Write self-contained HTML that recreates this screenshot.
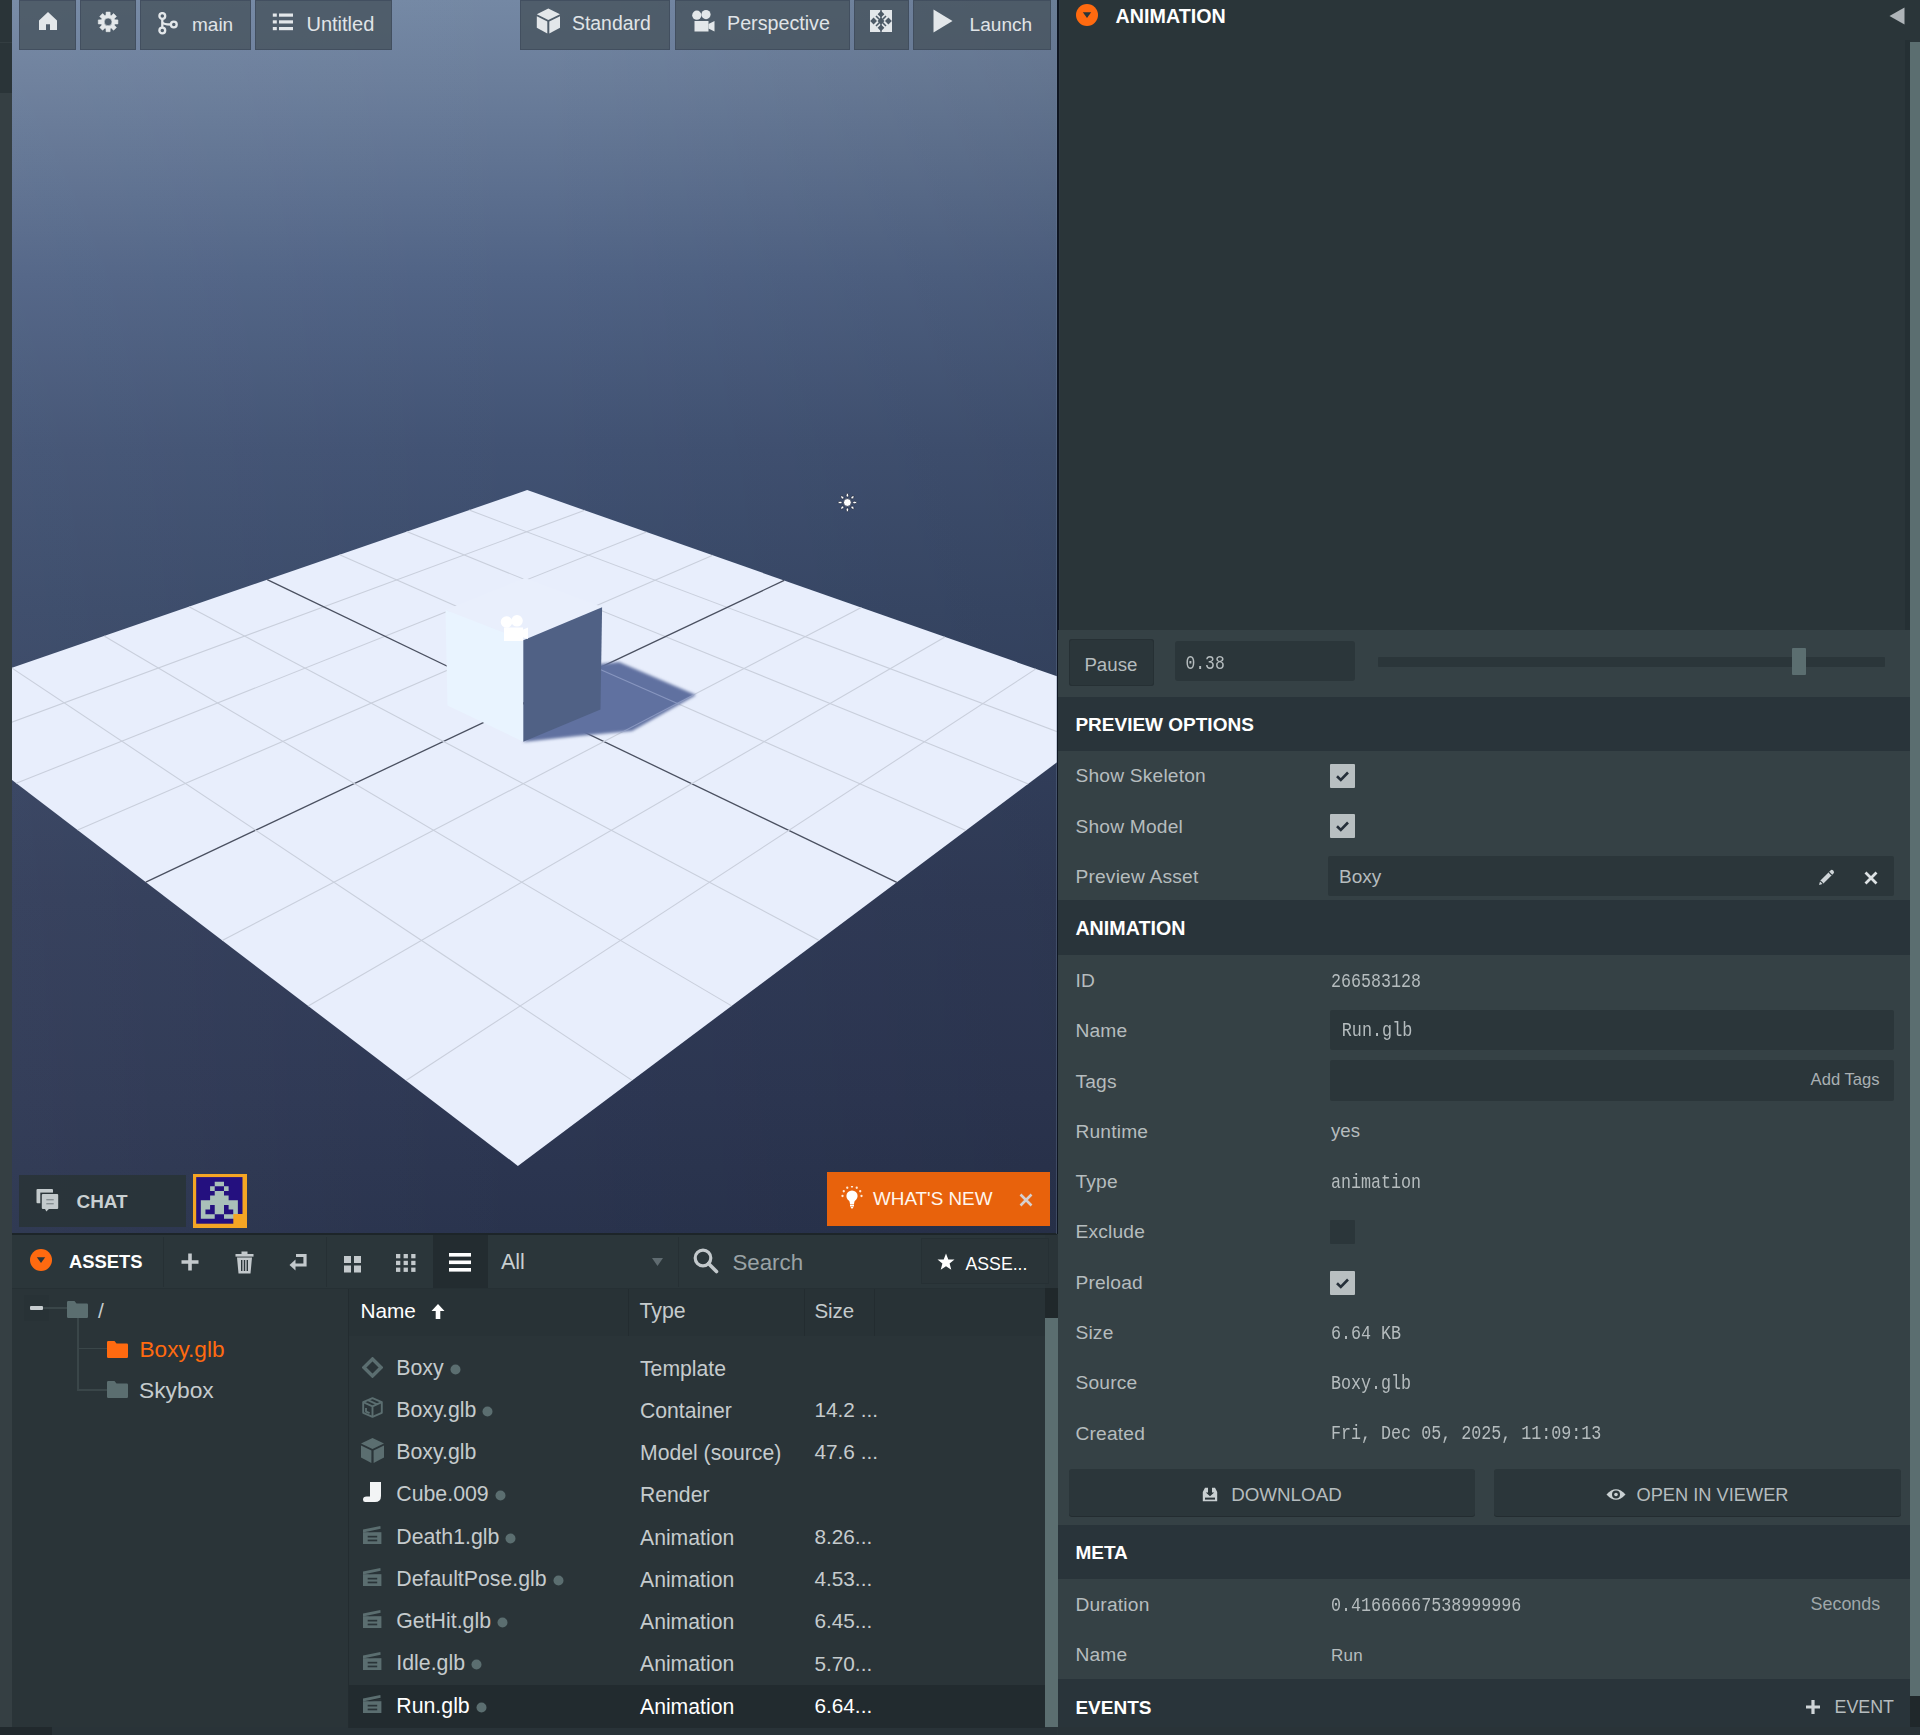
<!DOCTYPE html>
<html><head><meta charset="utf-8">
<style>
*{box-sizing:border-box;margin:0;padding:0}
html,body{width:1920px;height:1735px;overflow:hidden;background:#353f43;font-family:"Liberation Sans",sans-serif}
.abs{position:absolute}
.t{position:absolute;white-space:nowrap;line-height:1}
</style></head><body>
<div class="abs" style="left:0.0px;top:0.0px;width:12.0px;height:93.0px;background:#2a3438;"></div>
<div class="abs" style="left:0.0px;top:42.0px;width:12.0px;height:1.0px;background:#333d41;"></div>
<div class="abs" style="left:0.0px;top:1727.0px;width:52.0px;height:8.0px;background:#21292d;"></div>
<div class="abs" style="left:52.0px;top:1727.0px;width:1006.0px;height:8.0px;background:#293338;"></div>
<div id="vp" class="abs" style="left:12px;top:0px;width:1045px;height:1234px;overflow:hidden;background:linear-gradient(90deg,rgba(255,255,255,0.035) 0%,rgba(255,255,255,0) 50%,rgba(0,0,0,0) 50%,rgba(0,0,0,0.08) 100%),linear-gradient(180deg,rgb(116,136,164) 0.0%,rgb(107,126,155) 6.5%,rgb(80,99,133) 22.3%,rgb(65,82,115) 36.5%,rgb(57,73,104) 49.4%,rgb(49,60,89) 72.9%,rgb(45,55,83) 89.1%,rgb(41,51,77) 100.0%)">
<svg class="abs" style="left:0.0px;top:0.0px;" width="1045" height="1234" viewBox="0 0 1045 1234"><polygon points="515.2,490.1 1123.2,703.8 505.9,1165.9 -101.5,702.7" fill="#e8eefc"/>
<line x1="572.8" y1="510.3" x2="-51.2" y2="741.1" stroke="#c9cfdc" stroke-width="1.1"/>
<line x1="457.1" y1="510.1" x2="1072.3" y2="741.9" stroke="#c9cfdc" stroke-width="1.1"/>
<line x1="634.5" y1="532.0" x2="4.2" y2="783.3" stroke="#c9cfdc" stroke-width="1.1"/>
<line x1="394.7" y1="531.6" x2="1016.2" y2="783.9" stroke="#c9cfdc" stroke-width="1.1"/>
<line x1="700.8" y1="555.3" x2="65.6" y2="830.1" stroke="#c9cfdc" stroke-width="1.1"/>
<line x1="327.6" y1="554.8" x2="954.0" y2="830.5" stroke="#c9cfdc" stroke-width="1.1"/>
<line x1="772.2" y1="580.4" x2="133.8" y2="882.1" stroke="#4a5060" stroke-width="1.3"/>
<line x1="255.2" y1="579.7" x2="884.8" y2="882.3" stroke="#4a5060" stroke-width="1.3"/>
<line x1="849.3" y1="607.5" x2="210.2" y2="940.4" stroke="#c9cfdc" stroke-width="1.1"/>
<line x1="177.0" y1="606.7" x2="807.2" y2="940.4" stroke="#c9cfdc" stroke-width="1.1"/>
<line x1="933.0" y1="636.9" x2="296.2" y2="1006.0" stroke="#c9cfdc" stroke-width="1.1"/>
<line x1="92.1" y1="636.0" x2="719.6" y2="1005.9" stroke="#c9cfdc" stroke-width="1.1"/>
<line x1="1023.9" y1="668.9" x2="394.0" y2="1080.5" stroke="#c9cfdc" stroke-width="1.1"/>
<line x1="-0.4" y1="667.9" x2="620.1" y2="1080.4" stroke="#c9cfdc" stroke-width="1.1"/></svg>
</div>
<div class="abs" style="left:1057.0px;top:0.0px;width:1.0px;height:1234.0px;background:#1c2428;"></div>
<div class="abs" style="left:12.0px;top:1233.0px;width:1046.0px;height:2.0px;background:#1d2529;"></div>
<svg class="abs" style="left:12.0px;top:0.0px;" width="1045" height="1234" viewBox="0 0 1045 1234"><defs><filter id="blur2" x="-20%" y="-20%" width="140%" height="140%"><feGaussianBlur stdDeviation="1.6"/></filter></defs><polygon points="588.0,664.0 607.0,662.0 684.0,695.0 620.0,731.0 566.0,736.0 511.0,742.0 548.0,705.0" fill="#6171a0" filter="url(#blur2)"/><clipPath id="shc"><polygon points="588.0,664.0 607.0,662.0 684.0,695.0 620.0,731.0 566.0,736.0 511.0,742.0 548.0,705.0"/></clipPath><g clip-path="url(#shc)" opacity="0.55"><line x1="572.8" y1="510.3" x2="-51.2" y2="741.1" stroke="#a8b4d8" stroke-width="1.1"/><line x1="457.1" y1="510.1" x2="1072.3" y2="741.9" stroke="#a8b4d8" stroke-width="1.1"/><line x1="634.5" y1="532.0" x2="4.2" y2="783.3" stroke="#a8b4d8" stroke-width="1.1"/><line x1="394.7" y1="531.6" x2="1016.2" y2="783.9" stroke="#a8b4d8" stroke-width="1.1"/><line x1="700.8" y1="555.3" x2="65.6" y2="830.1" stroke="#a8b4d8" stroke-width="1.1"/><line x1="327.6" y1="554.8" x2="954.0" y2="830.5" stroke="#a8b4d8" stroke-width="1.1"/><line x1="849.3" y1="607.5" x2="210.2" y2="940.4" stroke="#a8b4d8" stroke-width="1.1"/><line x1="177.0" y1="606.7" x2="807.2" y2="940.4" stroke="#a8b4d8" stroke-width="1.1"/><line x1="933.0" y1="636.9" x2="296.2" y2="1006.0" stroke="#a8b4d8" stroke-width="1.1"/><line x1="92.1" y1="636.0" x2="719.6" y2="1005.9" stroke="#a8b4d8" stroke-width="1.1"/><line x1="1023.9" y1="668.9" x2="394.0" y2="1080.5" stroke="#a8b4d8" stroke-width="1.1"/><line x1="-0.4" y1="667.9" x2="620.1" y2="1080.4" stroke="#a8b4d8" stroke-width="1.1"/></g><polygon points="433.5,610.0 513.0,578.0 590.0,607.0 511.3,640.3" fill="#e9effc"/><polygon points="433.5,610.0 511.3,640.3 511.3,741.7 435.5,705.5" fill="#e9f4ff"/><polygon points="511.3,640.3 590.1,607.2 588.5,709.6 511.3,741.7" fill="#506185"/><g fill="#ffffff" transform="translate(488.0,615.0)"><circle cx="6.5" cy="7" r="5.8"/><circle cx="17" cy="5.8" r="5.8"/><rect x="4" y="12.5" width="19" height="13.5"/><polygon points="22,15 28,12.5 28,24 22,22"/></g><g transform="translate(835.4,502.5)" fill="#ffffff" stroke="#1c2438" stroke-width="0.7"><circle cx="0" cy="0" r="3.9"/><ellipse cx="7.30" cy="0.00" rx="1.25" ry="1.9" transform="rotate(90.0 7.30 0.00)"/><ellipse cx="5.16" cy="5.16" rx="1.25" ry="1.9" transform="rotate(135.0 5.16 5.16)"/><ellipse cx="0.00" cy="7.30" rx="1.25" ry="1.9" transform="rotate(180.0 0.00 7.30)"/><ellipse cx="-5.16" cy="5.16" rx="1.25" ry="1.9" transform="rotate(225.0 -5.16 5.16)"/><ellipse cx="-7.30" cy="0.00" rx="1.25" ry="1.9" transform="rotate(270.0 -7.30 0.00)"/><ellipse cx="-5.16" cy="-5.16" rx="1.25" ry="1.9" transform="rotate(315.0 -5.16 -5.16)"/><ellipse cx="-0.00" cy="-7.30" rx="1.25" ry="1.9" transform="rotate(360.0 -0.00 -7.30)"/><ellipse cx="5.16" cy="-5.16" rx="1.25" ry="1.9" transform="rotate(405.0 5.16 -5.16)"/></g></svg>
<div class="abs" style="left:19.0px;top:0;width:57.0px;height:50px;background:rgba(70,82,92,0.80);box-shadow:inset 0 0 0 1px rgba(58,70,88,0.6)"></div>
<div class="abs" style="left:80.0px;top:0;width:56.0px;height:50px;background:rgba(70,82,92,0.80);box-shadow:inset 0 0 0 1px rgba(58,70,88,0.6)"></div>
<div class="abs" style="left:140.0px;top:0;width:111.0px;height:50px;background:rgba(70,82,92,0.80);box-shadow:inset 0 0 0 1px rgba(58,70,88,0.6)"></div>
<div class="abs" style="left:255.0px;top:0;width:137.0px;height:50px;background:rgba(70,82,92,0.80);box-shadow:inset 0 0 0 1px rgba(58,70,88,0.6)"></div>
<div class="abs" style="left:520.0px;top:0;width:150.0px;height:50px;background:rgba(70,82,92,0.80);box-shadow:inset 0 0 0 1px rgba(58,70,88,0.6)"></div>
<div class="abs" style="left:675.0px;top:0;width:175.0px;height:50px;background:rgba(70,82,92,0.80);box-shadow:inset 0 0 0 1px rgba(58,70,88,0.6)"></div>
<div class="abs" style="left:854.0px;top:0;width:55.0px;height:50px;background:rgba(70,82,92,0.80);box-shadow:inset 0 0 0 1px rgba(58,70,88,0.6)"></div>
<div class="abs" style="left:913.0px;top:0;width:138.0px;height:50px;background:rgba(70,82,92,0.80);box-shadow:inset 0 0 0 1px rgba(58,70,88,0.6)"></div>
<svg class="abs" style="left:39.0px;top:12.0px;" width="18" height="18" viewBox="0 0 18 18"><path d="M9 0 L18 8.6 L18 18 L11 18 L11 12.2 L7 12.2 L7 18 L0 18 L0 8.6 Z" fill="#e3e7ea"/></svg>
<svg class="abs" style="left:97.0px;top:11.0px;" width="22" height="22" viewBox="0 0 22 22"><path fill-rule="evenodd" stroke="#e3e7ea" stroke-width="0.6" stroke-linejoin="round" d="M9.00 4.33 L9.10 1.10 L13.10 1.10 L13.20 4.33 L14.26 4.77 L16.61 2.56 L19.44 5.39 L17.23 7.74 L17.67 8.80 L20.90 8.90 L20.90 12.90 L17.67 13.00 L17.23 14.06 L19.44 16.41 L16.61 19.24 L14.26 17.03 L13.20 17.47 L13.10 20.70 L9.10 20.70 L9.00 17.47 L7.94 17.03 L5.59 19.24 L2.76 16.41 L4.97 14.06 L4.53 13.00 L1.30 12.90 L1.30 8.90 L4.53 8.80 L4.97 7.74 L2.76 5.39 L5.59 2.56 L7.94 4.77 Z M15.00 10.90 A3.90 3.90 0 1 0 7.20 10.90 A3.90 3.90 0 1 0 15.00 10.90 Z" fill="#e3e7ea"/></svg>
<svg class="abs" style="left:158.0px;top:12.0px;" width="21" height="23" viewBox="0 0 21 23"><g fill="none" stroke="#e3e7ea" stroke-width="2.3"><circle cx="4.3" cy="4" r="2.9"/><circle cx="4.3" cy="18.5" r="2.9"/><circle cx="15.8" cy="12.5" r="2.9"/><path d="M4.3 7 V15.5 M4.3 10 Q5 12.5 12.9 12.5"/></g></svg>
<div class="t" style="left:192.0px;top:14.7px;font-size:19.00px;color:#e0e4e7;">main</div>
<svg class="abs" style="left:272.0px;top:13.0px;" width="22" height="18" viewBox="0 0 22 18"><g fill="#e3e7ea"><rect x="0.8" y="0.5" width="4" height="3.2"/><rect x="7" y="0.5" width="14" height="3.2"/><rect x="0.8" y="7.3" width="4" height="3.2"/><rect x="7" y="7.3" width="14" height="3.2"/><rect x="0.8" y="14" width="4" height="3.2"/><rect x="7" y="14" width="14" height="3.2"/></g></svg>
<div class="t" style="left:306.5px;top:13.9px;font-size:20.00px;color:#e0e4e7;">Untitled</div>
<svg class="abs" style="left:536.0px;top:8.0px;" width="25" height="26" viewBox="0 0 25 26"><g fill="#e3e7ea"><polygon points="12.3,0.5 24,6.3 12.3,12 0.8,6.3"/><polygon points="0.8,8.2 11.3,13.6 11.3,25.5 0.8,19.8"/><polygon points="13.3,13.6 24,8.2 24,19.8 13.3,25.5"/></g></svg>
<div class="t" style="left:572.0px;top:14.4px;font-size:19.40px;color:#e0e4e7;">Standard</div>
<svg class="abs" style="left:692.0px;top:10.0px;" width="23" height="22" viewBox="0 0 23 22"><g fill="#e3e7ea"><circle cx="4.8" cy="5.2" r="4.6"/><circle cx="14" cy="4.6" r="4.6"/><rect x="2.5" y="11" width="14" height="10.5"/><polygon points="16.5,14 22.5,11 22.5,21.5 16.5,18.5"/></g></svg>
<div class="t" style="left:727.0px;top:14.1px;font-size:19.70px;color:#e0e4e7;">Perspective</div>
<svg class="abs" style="left:870.3px;top:10.3px;" width="22" height="22" viewBox="0 0 22 22"><rect x="0" y="0" width="22" height="22" fill="#e3e7ea"/><g fill="#4d5a67"><polygon points="0.2,11.0 3.6,7.6 7.0,11.0 3.6,14.4"/><polygon points="15.0,11.0 18.4,7.6 21.8,11.0 18.4,14.4"/><polygon points="7.6,4.2 11.0,0.8 14.4,4.2 11.0,7.6"/><polygon points="7.6,17.8 11.0,14.4 14.4,17.8 11.0,21.2"/><polygon points="11,7.5 14.5,11 11,14.5 7.5,11"/><rect x="10.3" y="0" width="1.4" height="22"/><path d="M6 6 L16 16 M16 6 L6 16" stroke="#4d5a67" stroke-width="1.6"/></g></svg>
<svg class="abs" style="left:933.0px;top:9.0px;" width="20" height="24" viewBox="0 0 20 24"><polygon points="0.5,0.5 19.5,12 0.5,23.5" fill="#e3e7ea"/></svg>
<div class="t" style="left:969.6px;top:14.6px;font-size:19.10px;color:#e0e4e7;">Launch</div>
<div class="abs" style="left:19.0px;top:1175.0px;width:167.0px;height:52.0px;background:rgba(41,52,56,0.92);"></div>
<svg class="abs" style="left:36.0px;top:1188.0px;" width="23" height="24" viewBox="0 0 23 24"><rect x="0.5" y="1" width="16.5" height="14.3" fill="#c3cacc" rx="1"/><rect x="4.3" y="4.6" width="18.7" height="17" fill="#2b3539"/><rect x="5.8" y="6" width="16.4" height="15" fill="#c3cacc" rx="1"/><polygon points="8.8,20.5 13.5,20.5 10.3,23.5" fill="#c3cacc"/><rect x="10.3" y="11" width="7.4" height="1.4" fill="#879093"/><rect x="10.3" y="15" width="7.4" height="1.4" fill="#879093"/></svg>
<div class="t" style="left:76.5px;top:1192.6px;font-size:18.90px;color:#c9d0d2;font-weight:bold;">CHAT</div>
<svg class="abs" style="left:193.4px;top:1173.9px;" width="54" height="54" viewBox="0 0 54 54"><rect x="0" y="0" width="54" height="54" fill="#f5a524"/><rect x="3.2" y="3.1" width="46.3" height="46.6" fill="#24107f"/><path d="M21.72 7.73h4.63v4.63h-4.63zM26.35 7.73h4.63v4.63h-4.63zM17.09 12.36h4.63v4.63h-4.63zM30.98 12.36h4.63v4.63h-4.63zM21.72 16.99h4.63v4.63h-4.63zM26.35 16.99h4.63v4.63h-4.63zM17.09 21.62h4.63v4.63h-4.63zM21.72 21.62h4.63v4.63h-4.63zM26.35 21.62h4.63v4.63h-4.63zM30.98 21.62h4.63v4.63h-4.63zM7.83 26.25h4.63v4.63h-4.63zM12.46 26.25h4.63v4.63h-4.63zM17.09 26.25h4.63v4.63h-4.63zM21.72 26.25h4.63v4.63h-4.63zM26.35 26.25h4.63v4.63h-4.63zM30.98 26.25h4.63v4.63h-4.63zM35.61 26.25h4.63v4.63h-4.63zM40.24 26.25h4.63v4.63h-4.63zM7.83 30.88h4.63v4.63h-4.63zM12.46 30.88h4.63v4.63h-4.63zM21.72 30.88h4.63v4.63h-4.63zM26.35 30.88h4.63v4.63h-4.63zM35.61 30.88h4.63v4.63h-4.63zM40.24 30.88h4.63v4.63h-4.63zM7.83 35.51h4.63v4.63h-4.63zM21.72 35.51h4.63v4.63h-4.63zM26.35 35.51h4.63v4.63h-4.63zM40.24 35.51h4.63v4.63h-4.63zM7.83 40.14h4.63v4.63h-4.63zM12.46 40.14h4.63v4.63h-4.63zM17.09 40.14h4.63v4.63h-4.63zM30.98 40.14h4.63v4.63h-4.63zM35.61 40.14h4.63v4.63h-4.63zM40.24 40.14h4.63v4.63h-4.63z" fill="#a9c0b9"/><rect x="40.3" y="40" width="13.7" height="14" fill="#f5a524"/></svg>
<div class="abs" style="left:827.0px;top:1172.0px;width:223.0px;height:54.0px;background:#e8620c;"></div>
<svg class="abs" style="left:841.0px;top:1186.0px;" width="22" height="24" viewBox="0 0 22 24"><g fill="#ffffff"><circle cx="11" cy="10" r="5.6"/><path d="M8 13 H14 L13 18 H9 Z"/><rect x="9" y="18.5" width="4" height="2"/><polygon points="9.5,21 12.5,21 11,23"/></g><g fill="#ffe9d6"><circle cx="1.50" cy="10.00" r="1.15"/><circle cx="2.77" cy="5.25" r="1.15"/><circle cx="6.25" cy="1.77" r="1.15"/><circle cx="11.00" cy="0.50" r="1.15"/><circle cx="15.75" cy="1.77" r="1.15"/><circle cx="19.23" cy="5.25" r="1.15"/><circle cx="20.50" cy="10.00" r="1.15"/></g></svg>
<div class="t" style="left:873.0px;top:1190.3px;font-size:18.85px;color:#fff6ee;">WHAT'S NEW</div>
<svg class="abs" style="left:1019.0px;top:1193.0px;" width="14" height="14" viewBox="0 0 14 14"><path d="M1.5 1.5 L12.5 12.5 M12.5 1.5 L1.5 12.5" stroke="#d6d0cf" stroke-width="2.6"/></svg>
<div class="abs" style="left:1057.0px;top:0.0px;width:863.0px;height:1735.0px;background:#2a3539;"></div>
<div class="abs" style="left:1057.0px;top:0.0px;width:1.6px;height:1234.0px;background:#0f1622;"></div>
<div class="abs" style="left:1058.6px;top:0.0px;width:1.4px;height:1234.0px;background:#2f393f;"></div>
<div class="abs" style="left:1056.0px;top:0.0px;width:1.0px;height:1234.0px;background:rgba(110,125,150,0.35);"></div>
<svg class="abs" style="left:1076.0px;top:3.5px;" width="22" height="22" viewBox="0 0 22 22"><circle cx="11" cy="11" r="11" fill="#ff6a10"/><polygon points="6.8,8.3 15.2,8.3 11,14" fill="#2a3539"/></svg>
<div class="t" style="left:1115.6px;top:6.9px;font-size:19.70px;color:#ffffff;font-weight:bold;">ANIMATION</div>
<svg class="abs" style="left:1888.5px;top:6.5px;" width="16" height="18" viewBox="0 0 16 18"><polygon points="0.5,9 15.5,0.5 15.5,17.5" fill="#aeb4b8"/></svg>
<div class="abs" style="left:1904.5px;top:40.0px;width:5.5px;height:1687.0px;background:#253034;"></div>
<div class="abs" style="left:1910.0px;top:42.0px;width:10.0px;height:1654.0px;background:#5b6e70;"></div>
<div class="abs" style="left:1910.0px;top:1696.0px;width:10.0px;height:31.0px;background:#20282b;"></div>
<div class="abs" style="left:1058.0px;top:1727.0px;width:862.0px;height:8.0px;background:#293338;"></div>
<div class="abs" style="left:1058.0px;top:630.0px;width:852.0px;height:67.0px;background:#354145;"></div>
<div class="abs" style="left:1069.0px;top:639.0px;width:85.0px;height:47.0px;background:#2b363a;border-radius:3px;box-shadow:inset 0 0 0 1px #263034"></div>
<div class="t" style="left:1084.4px;top:655.7px;font-size:18.70px;color:#b5bcbe;">Pause</div>
<div class="abs" style="left:1174.5px;top:641.0px;width:180.0px;height:40.0px;background:#2b363a;border-radius:3px"></div>
<div class="t" style="left:1185.4px;top:656.7px;font-size:16.40px;color:#b5bcbe;font-family:'Liberation Mono',monospace;transform:scaleY(1.19);transform-origin:0 12.57px;">0.38</div>
<div class="abs" style="left:1378.0px;top:657.0px;width:507.0px;height:9.5px;background:#2b363a;border-radius:1px"></div>
<div class="abs" style="left:1791.7px;top:647.5px;width:14.0px;height:27.5px;background:#5b6e70;border-radius:1px"></div>
<div class="abs" style="left:1058.0px;top:697.0px;width:852.0px;height:54.0px;background:#29343a;"></div>
<div class="t" style="left:1075.4px;top:715.4px;font-size:19.00px;color:#ffffff;font-weight:bold;">PREVIEW OPTIONS</div>
<div class="abs" style="left:1058.0px;top:751.0px;width:852.0px;height:149.0px;background:#354145;"></div>
<div class="abs" style="left:1058.0px;top:900.0px;width:852.0px;height:55.0px;background:#29343a;"></div>
<div class="t" style="left:1075.4px;top:919.0px;font-size:19.70px;color:#ffffff;font-weight:bold;">ANIMATION</div>
<div class="abs" style="left:1058.0px;top:955.0px;width:852.0px;height:570.0px;background:#354145;"></div>
<div class="abs" style="left:1058.0px;top:1525.0px;width:852.0px;height:54.0px;background:#29343a;"></div>
<div class="t" style="left:1075.4px;top:1543.4px;font-size:19.00px;color:#ffffff;font-weight:bold;">META</div>
<div class="abs" style="left:1058.0px;top:1579.0px;width:852.0px;height:100.0px;background:#354145;"></div>
<div class="abs" style="left:1058.0px;top:1679.0px;width:852.0px;height:48.0px;background:#29343a;"></div>
<div class="t" style="left:1075.4px;top:1697.5px;font-size:19.00px;color:#ffffff;font-weight:bold;">EVENTS</div>
<div class="t" style="left:1075.4px;top:766.0px;font-size:19.20px;color:#b5bcbe;letter-spacing:0.20px;">Show Skeleton</div>
<svg class="abs" style="left:1330.0px;top:763.5px;" width="25" height="24" viewBox="0 0 25 24"><rect width="25" height="24" rx="1" fill="#b8bfc1"/><path d="M7 12.3 L10.8 16 L18 8.5" fill="none" stroke="#26303a" stroke-width="2.6"/></svg>
<div class="t" style="left:1075.4px;top:816.6px;font-size:19.20px;color:#b5bcbe;letter-spacing:0.20px;">Show Model</div>
<svg class="abs" style="left:1330.0px;top:813.5px;" width="25" height="24" viewBox="0 0 25 24"><rect width="25" height="24" rx="1" fill="#b8bfc1"/><path d="M7 12.3 L10.8 16 L18 8.5" fill="none" stroke="#26303a" stroke-width="2.6"/></svg>
<div class="t" style="left:1075.4px;top:866.9px;font-size:19.20px;color:#b5bcbe;letter-spacing:0.20px;">Preview Asset</div>
<div class="abs" style="left:1328.0px;top:856.0px;width:565.5px;height:40.0px;background:#2b363a;border-radius:2px"></div>
<div class="t" style="left:1339.0px;top:867.1px;font-size:19.00px;color:#b5bcbe;">Boxy</div>
<svg class="abs" style="left:1817.0px;top:868.0px;" width="19" height="19" viewBox="0 0 19 19"><path d="M2 17 L3.2 12.8 L13.5 2.5 Q14.8 1.2 16.2 2.6 L16.4 2.8 Q17.8 4.2 16.5 5.5 L6.2 15.8 Z" fill="#cfd5d8"/><path d="M3.2 12.8 L6.2 15.8" stroke="#2b363a" stroke-width="1.2"/><path d="M11.8 4.2 L14.8 7.2" stroke="#2b363a" stroke-width="1.2"/></svg>
<svg class="abs" style="left:1864.0px;top:871.0px;" width="14" height="14" viewBox="0 0 14 14"><path d="M1.5 1.5 L12.5 12.5 M12.5 1.5 L1.5 12.5" stroke="#dde2e4" stroke-width="2.8"/></svg>
<div class="t" style="left:1075.4px;top:970.9px;font-size:19.20px;color:#b5bcbe;letter-spacing:0.20px;">ID</div>
<div class="t" style="left:1075.4px;top:1021.2px;font-size:19.20px;color:#b5bcbe;letter-spacing:0.20px;">Name</div>
<div class="t" style="left:1075.4px;top:1071.5px;font-size:19.20px;color:#b5bcbe;letter-spacing:0.20px;">Tags</div>
<div class="t" style="left:1075.4px;top:1121.8px;font-size:19.20px;color:#b5bcbe;letter-spacing:0.20px;">Runtime</div>
<div class="t" style="left:1075.4px;top:1172.1px;font-size:19.20px;color:#b5bcbe;letter-spacing:0.20px;">Type</div>
<div class="t" style="left:1075.4px;top:1222.4px;font-size:19.20px;color:#b5bcbe;letter-spacing:0.20px;">Exclude</div>
<div class="t" style="left:1075.4px;top:1272.7px;font-size:19.20px;color:#b5bcbe;letter-spacing:0.20px;">Preload</div>
<div class="t" style="left:1075.4px;top:1323.0px;font-size:19.20px;color:#b5bcbe;letter-spacing:0.20px;">Size</div>
<div class="t" style="left:1075.4px;top:1373.3px;font-size:19.20px;color:#b5bcbe;letter-spacing:0.20px;">Source</div>
<div class="t" style="left:1075.4px;top:1423.6px;font-size:19.20px;color:#b5bcbe;letter-spacing:0.20px;">Created</div>
<div class="t" style="left:1331.0px;top:974.7px;font-size:16.70px;color:#b5bcbe;font-family:'Liberation Mono',monospace;transform:scaleY(1.19);transform-origin:0 12.80px;">266583128</div>
<div class="abs" style="left:1330.0px;top:1010.0px;width:563.5px;height:40.0px;background:#2b363a;border-radius:2px"></div>
<div class="t" style="left:1341.8px;top:1024.4px;font-size:16.80px;color:#b5bcbe;font-family:'Liberation Mono',monospace;transform:scaleY(1.19);transform-origin:0 12.88px;">Run.glb</div>
<div class="abs" style="left:1330.0px;top:1060.0px;width:563.5px;height:40.5px;background:#2b363a;border-radius:2px"></div>
<div class="t" style="left:1810.6px;top:1072.2px;font-size:16.60px;color:#a9b0b3;">Add Tags</div>
<div class="t" style="left:1331.0px;top:1121.9px;font-size:18.60px;color:#b5bcbe;">yes</div>
<div class="t" style="left:1331.0px;top:1175.9px;font-size:16.70px;color:#b5bcbe;font-family:'Liberation Mono',monospace;transform:scaleY(1.19);transform-origin:0 12.80px;">animation</div>
<div class="abs" style="left:1330.0px;top:1219.5px;width:25.0px;height:24.0px;background:#2b363a;border-radius:1px"></div>
<svg class="abs" style="left:1330.0px;top:1270.5px;" width="25" height="24" viewBox="0 0 25 24"><rect width="25" height="24" rx="1" fill="#b8bfc1"/><path d="M7 12.3 L10.8 16 L18 8.5" fill="none" stroke="#26303a" stroke-width="2.6"/></svg>
<div class="t" style="left:1331.0px;top:1326.8px;font-size:16.70px;color:#b5bcbe;font-family:'Liberation Mono',monospace;transform:scaleY(1.19);transform-origin:0 12.80px;">6.64 KB</div>
<div class="t" style="left:1331.0px;top:1377.1px;font-size:16.70px;color:#b5bcbe;font-family:'Liberation Mono',monospace;transform:scaleY(1.19);transform-origin:0 12.80px;">Boxy.glb</div>
<div class="t" style="left:1331.0px;top:1427.4px;font-size:16.70px;color:#b5bcbe;font-family:'Liberation Mono',monospace;transform:scaleY(1.19);transform-origin:0 12.80px;">Fri, Dec 05, 2025, 11:09:13</div>
<div class="abs" style="left:1069.0px;top:1468.5px;width:405.5px;height:47.0px;background:#2b363a;border-radius:3px;box-shadow:0 1px 0 #232c30"></div>
<div class="abs" style="left:1494.0px;top:1468.5px;width:407.0px;height:47.0px;background:#2b363a;border-radius:3px;box-shadow:0 1px 0 #232c30"></div>
<svg class="abs" style="left:1202.0px;top:1487.0px;" width="16" height="15" viewBox="0 0 16 15"><path d="M0.8 5 L3 0.8 H6 V5.5 H3.8 L8 9.3 L12.2 5.5 H10 V0.8 H13 L15.2 5 V14.2 H0.8 Z" fill="#c9d0d2"/><rect x="3" y="10.6" width="10" height="2" fill="#2b363a"/></svg>
<div class="t" style="left:1231.2px;top:1485.5px;font-size:18.78px;color:#b5bcbe;">DOWNLOAD</div>
<svg class="abs" style="left:1606.0px;top:1487.0px;" width="20" height="15" viewBox="0 0 20 15"><path d="M0.5 7.5 Q10 -3 19.5 7.5 Q10 18 0.5 7.5 Z" fill="#c9d0d2"/><circle cx="10" cy="7.5" r="4" fill="#2b363a"/><circle cx="10" cy="7.5" r="1.8" fill="#c9d0d2"/></svg>
<div class="t" style="left:1636.5px;top:1485.8px;font-size:18.24px;color:#b5bcbe;">OPEN IN VIEWER</div>
<div class="t" style="left:1075.4px;top:1594.9px;font-size:19.20px;color:#b5bcbe;letter-spacing:0.20px;">Duration</div>
<div class="t" style="left:1331.0px;top:1598.7px;font-size:16.70px;color:#b5bcbe;font-family:'Liberation Mono',monospace;transform:scaleY(1.19);transform-origin:0 12.80px;">0.41666667538999996</div>
<div class="t" style="left:1810.6px;top:1595.5px;font-size:17.90px;color:#9fa7aa;">Seconds</div>
<div class="t" style="left:1075.4px;top:1645.3px;font-size:19.20px;color:#b5bcbe;letter-spacing:0.20px;">Name</div>
<div class="t" style="left:1331.0px;top:1647.2px;font-size:17.00px;color:#b5bcbe;letter-spacing:0.30px;">Run</div>
<svg class="abs" style="left:1805.0px;top:1699.0px;" width="16" height="16" viewBox="0 0 16 16"><path d="M8 1 V15 M1 8 H15" stroke="#cfd5d8" stroke-width="3.2"/></svg>
<div class="t" style="left:1834.5px;top:1698.5px;font-size:17.85px;color:#b5bcbe;">EVENT</div>
<div class="abs" style="left:12.0px;top:1235.0px;width:1046.0px;height:492.0px;background:#2a3438;"></div>
<div class="abs" style="left:12.0px;top:1235.0px;width:1033.0px;height:53.0px;background:#2b363a;"></div>
<div class="abs" style="left:163.0px;top:1237.0px;width:1.0px;height:50.0px;background:#263034;"></div>
<div class="abs" style="left:325.5px;top:1237.0px;width:1.0px;height:50.0px;background:#263034;"></div>
<div class="abs" style="left:678.0px;top:1237.0px;width:1.0px;height:50.0px;background:#263034;"></div>
<svg class="abs" style="left:30.3px;top:1249.0px;" width="22" height="22" viewBox="0 0 22 22"><circle cx="11" cy="11" r="11" fill="#ff6a10"/><polygon points="6.8,8.3 15.2,8.3 11,14" fill="#2a3539"/></svg>
<div class="t" style="left:69.0px;top:1253.4px;font-size:18.40px;color:#ffffff;font-weight:bold;">ASSETS</div>
<svg class="abs" style="left:181.0px;top:1253.0px;" width="18" height="18" viewBox="0 0 18 18"><path d="M9 0.5 V17.5 M0.5 9 H17.5" stroke="#c3c9cc" stroke-width="3.6"/></svg>
<svg class="abs" style="left:235.0px;top:1251.0px;" width="19" height="23" viewBox="0 0 19 23"><g fill="#c3c9cc"><rect x="0.5" y="3" width="18" height="2.6"/><rect x="6.5" y="0.5" width="6" height="3"/><path d="M2 6.5 H17 L15.5 22.5 H3.5 Z"/></g><g fill="#2b363a"><rect x="6" y="9" width="1.4" height="11"/><rect x="8.8" y="9" width="1.4" height="11"/><rect x="11.6" y="9" width="1.4" height="11"/></g></svg>
<svg class="abs" style="left:288.5px;top:1253.0px;" width="19" height="19" viewBox="0 0 19 19"><path d="M4 12 H16 V2.5 H7" fill="none" stroke="#c3c9cc" stroke-width="3.2"/><polygon points="0.5,12 6.5,6.5 6.5,17.5" fill="#c3c9cc"/></svg>
<svg class="abs" style="left:343.5px;top:1255.5px;" width="18" height="17" viewBox="0 0 18 17"><g fill="#c3c9cc"><rect x="0" y="0" width="7" height="7"/><rect x="10" y="0" width="7" height="7"/><rect x="0" y="9.5" width="7" height="7"/><rect x="10" y="9.5" width="7" height="7"/></g></svg>
<svg class="abs" style="left:396.0px;top:1254.0px;" width="20" height="19" viewBox="0 0 20 19"><g fill="#c3c9cc"><rect x="0.0" y="0.0" width="4.3" height="4.3"/><rect x="7.6" y="0.0" width="4.3" height="4.3"/><rect x="15.2" y="0.0" width="4.3" height="4.3"/><rect x="0.0" y="6.8" width="4.3" height="4.3"/><rect x="7.6" y="6.8" width="4.3" height="4.3"/><rect x="15.2" y="6.8" width="4.3" height="4.3"/><rect x="0.0" y="13.6" width="4.3" height="4.3"/><rect x="7.6" y="13.6" width="4.3" height="4.3"/><rect x="15.2" y="13.6" width="4.3" height="4.3"/></g></svg>
<div class="abs" style="left:433.0px;top:1235.0px;width:55.0px;height:53.0px;background:#232c30;"></div>
<svg class="abs" style="left:448.7px;top:1253.0px;" width="22" height="19" viewBox="0 0 22 19"><g fill="#ffffff"><rect x="0" y="0" width="22" height="3.6"/><rect x="0" y="7.5" width="22" height="3.6"/><rect x="0" y="15" width="22" height="3.6"/></g></svg>
<div class="t" style="left:501.0px;top:1252.4px;font-size:21.50px;color:#c8cfd1;">All</div>
<svg class="abs" style="left:651.5px;top:1257.5px;" width="11" height="8" viewBox="0 0 11 8"><polygon points="0,0 11,0 5.5,8" fill="#5f6b70"/></svg>
<svg class="abs" style="left:692.5px;top:1247.5px;" width="26" height="26" viewBox="0 0 26 26"><circle cx="10" cy="10" r="7.8" fill="none" stroke="#c3c9cc" stroke-width="3.2"/><path d="M15.5 15.5 L23.5 23.5" stroke="#c3c9cc" stroke-width="3.6" stroke-linecap="round"/></svg>
<div class="t" style="left:732.4px;top:1251.7px;font-size:22.30px;color:#9aa3a6;">Search</div>
<div class="abs" style="left:920.5px;top:1238.0px;width:128.0px;height:46.0px;background:#2a3438;box-shadow:inset 0 0 0 1px #263034"></div>
<svg class="abs" style="left:936.5px;top:1253.0px;" width="18" height="18" viewBox="0 0 18 18"><polygon points="9,0.5 11.3,6.4 17.5,6.6 12.6,10.5 14.3,16.7 9,13.2 3.7,16.7 5.4,10.5 0.5,6.6 6.7,6.4" fill="#ffffff"/></svg>
<div class="t" style="left:965.5px;top:1255.6px;font-size:17.70px;color:#ffffff;">ASSE...</div>
<div class="abs" style="left:12.0px;top:1287.5px;width:1033.0px;height:1.0px;background:#263034;"></div>
<div class="abs" style="left:1045.0px;top:1288.0px;width:13.0px;height:30.0px;background:#20282b;"></div>
<div class="abs" style="left:1045.0px;top:1318.0px;width:13.0px;height:409.0px;background:#5b6e70;"></div>
<div class="abs" style="left:23.5px;top:1295.0px;width:25.0px;height:26.0px;background:#283236;"></div>
<div class="abs" style="left:29.5px;top:1305.5px;width:13.5px;height:4.5px;background:#c7cdd0;border-radius:1px"></div>
<div class="abs" style="left:43.0px;top:1307.0px;width:24.0px;height:1.5px;background:#3a4649;"></div>
<div class="abs" style="left:77.0px;top:1317.0px;width:1.5px;height:73.0px;background:#3a4649;"></div>
<div class="abs" style="left:77.0px;top:1347.5px;width:30.0px;height:1.5px;background:#3a4649;"></div>
<div class="abs" style="left:77.0px;top:1389.0px;width:30.0px;height:1.5px;background:#3a4649;"></div>
<svg class="abs" style="left:67.0px;top:1300.5px;" width="21" height="17" viewBox="0 0 21 17"><path d="M0 1.2 Q0 0 1.2 0 H7.5 L9.5 2.5 H19.8 Q21 2.5 21 3.7 V15.8 Q21 17 19.8 17 H1.2 Q0 17 0 15.8 Z" fill="#5b6e70"/></svg>
<div class="t" style="left:98.0px;top:1299.7px;font-size:21.00px;color:#c5cbcd;">/</div>
<svg class="abs" style="left:107.0px;top:1340.5px;" width="21" height="17" viewBox="0 0 21 17"><path d="M0 1.2 Q0 0 1.2 0 H7.5 L9.5 2.5 H19.8 Q21 2.5 21 3.7 V15.8 Q21 17 19.8 17 H1.2 Q0 17 0 15.8 Z" fill="#ff6a10"/></svg>
<div class="t" style="left:139.5px;top:1338.5px;font-size:22.60px;color:#ff6a10;">Boxy.glb</div>
<svg class="abs" style="left:107.0px;top:1381.0px;" width="21" height="17" viewBox="0 0 21 17"><path d="M0 1.2 Q0 0 1.2 0 H7.5 L9.5 2.5 H19.8 Q21 2.5 21 3.7 V15.8 Q21 17 19.8 17 H1.2 Q0 17 0 15.8 Z" fill="#5b6e70"/></svg>
<div class="t" style="left:139.0px;top:1379.0px;font-size:22.80px;color:#c5cbcd;">Skybox</div>
<div class="abs" style="left:348.0px;top:1288.5px;width:1.0px;height:439.0px;background:#232c30;"></div>
<div class="abs" style="left:349.0px;top:1288.5px;width:696.0px;height:47.0px;background:#283236;"></div>
<div class="abs" style="left:627.5px;top:1288.5px;width:1.0px;height:47.0px;background:#232c30;"></div>
<div class="abs" style="left:803.5px;top:1288.5px;width:1.0px;height:47.0px;background:#232c30;"></div>
<div class="abs" style="left:874.0px;top:1288.5px;width:1.0px;height:47.0px;background:#232c30;"></div>
<div class="t" style="left:360.4px;top:1301.0px;font-size:20.80px;color:#ffffff;">Name</div>
<svg class="abs" style="left:431.0px;top:1303.5px;" width="14" height="15.5" viewBox="0 0 14 15.5"><polygon points="7,0 13.5,7 9.3,7 9.3,15.5 4.7,15.5 4.7,7 0.5,7" fill="#ffffff"/></svg>
<div class="t" style="left:639.5px;top:1300.6px;font-size:21.30px;color:#c5cbcd;">Type</div>
<div class="t" style="left:814.4px;top:1301.2px;font-size:20.50px;color:#c5cbcd;">Size</div>
<div class="abs" style="left:349.0px;top:1685.0px;width:696.0px;height:42.5px;background:#222b2f;"></div>
<svg class="abs" style="left:361.7px;top:1357.3px;" width="21" height="21" viewBox="0 0 21 21"><polygon points="10.5,2 19,10.5 10.5,19 2,10.5" fill="none" stroke="#5b6e70" stroke-width="3.4"/></svg>
<div class="t" style="left:396.3px;top:1357.5px;font-size:21.30px;color:#c5cbcd;">Boxy</div>
<svg class="abs" style="left:449.7px;top:1363.5px;" width="11" height="11" viewBox="0 0 11 11"><circle cx="5.5" cy="5.5" r="5" fill="#5b6e70"/></svg>
<div class="t" style="left:640.0px;top:1357.6px;font-size:21.20px;color:#c5cbcd;">Template</div>
<svg class="abs" style="left:361.7px;top:1397.2px;" width="21" height="21" viewBox="0 0 21 21"><g fill="none" stroke="#5b6e70" stroke-width="1.9" stroke-linejoin="round"><polygon points="10.5,1.2 19.8,5.2 19.8,15.8 10.5,19.8 1.2,15.8 1.2,5.2"/><path d="M1.2 5.2 L10.5 9.4 L19.8 5.2 M10.5 9.4 V19.8 M5.8 3.2 L15.2 7.3"/><path d="M4 11 V14.6 L7.6 16.2"/></g></svg>
<div class="t" style="left:396.3px;top:1399.7px;font-size:21.30px;color:#c5cbcd;">Boxy.glb</div>
<svg class="abs" style="left:482.4px;top:1405.8px;" width="11" height="11" viewBox="0 0 11 11"><circle cx="5.5" cy="5.5" r="5" fill="#5b6e70"/></svg>
<div class="t" style="left:640.0px;top:1399.8px;font-size:21.20px;color:#c5cbcd;">Container</div>
<div class="t" style="left:814.4px;top:1400.1px;font-size:20.80px;color:#c5cbcd;">14.2 ...</div>
<svg class="abs" style="left:360.7px;top:1437.5px;" width="23" height="25" viewBox="0 0 23 25"><g fill="#5b6e70"><polygon points="11.5,0 23,5.6 11.5,11 0,5.6"/><polygon points="0,7.4 10.4,12.6 10.4,25 0,19.6"/><polygon points="12.6,12.6 23,7.4 23,19.6 12.6,25"/></g></svg>
<div class="t" style="left:396.3px;top:1442.0px;font-size:21.30px;color:#c5cbcd;">Boxy.glb</div>
<div class="t" style="left:640.0px;top:1442.1px;font-size:21.20px;color:#c5cbcd;">Model (source)</div>
<div class="t" style="left:814.4px;top:1442.4px;font-size:20.80px;color:#c5cbcd;">47.6 ...</div>
<svg class="abs" style="left:363.2px;top:1482.2px;" width="18" height="20" viewBox="0 0 18 20"><path d="M7 0 H18 V14 Q18 20 12 20 H2.2 Q0 20 0 17.8 Q0 14.6 3.6 14.6 H7 Z" fill="#f2f4f5"/></svg>
<div class="t" style="left:396.3px;top:1484.2px;font-size:21.30px;color:#c5cbcd;">Cube.009</div>
<svg class="abs" style="left:494.7px;top:1490.2px;" width="11" height="11" viewBox="0 0 11 11"><circle cx="5.5" cy="5.5" r="5" fill="#5b6e70"/></svg>
<div class="t" style="left:640.0px;top:1484.3px;font-size:21.20px;color:#c5cbcd;">Render</div>
<svg class="abs" style="left:362.7px;top:1525.5px;" width="19" height="18" viewBox="0 0 19 18"><g fill="#5b6e70"><polygon points="0,3.6 17.4,0 17.6,2.8 0,6.4"/><rect x="0" y="6.2" width="18.4" height="11.8"/></g><g fill="#2a3438"><polygon points="5,6.2 18.4,3.4 18.4,5.8 5,6.2"/><rect x="4.7" y="9.8" width="9.5" height="1.7"/><rect x="4.7" y="13.6" width="9.5" height="1.7"/></g></svg>
<div class="t" style="left:396.3px;top:1526.5px;font-size:21.30px;color:#c5cbcd;">Death1.glb</div>
<svg class="abs" style="left:505.3px;top:1532.5px;" width="11" height="11" viewBox="0 0 11 11"><circle cx="5.5" cy="5.5" r="5" fill="#5b6e70"/></svg>
<div class="t" style="left:640.0px;top:1526.6px;font-size:21.20px;color:#c5cbcd;">Animation</div>
<div class="t" style="left:814.4px;top:1526.9px;font-size:20.80px;color:#c5cbcd;">8.26...</div>
<svg class="abs" style="left:362.7px;top:1567.8px;" width="19" height="18" viewBox="0 0 19 18"><g fill="#5b6e70"><polygon points="0,3.6 17.4,0 17.6,2.8 0,6.4"/><rect x="0" y="6.2" width="18.4" height="11.8"/></g><g fill="#2a3438"><polygon points="5,6.2 18.4,3.4 18.4,5.8 5,6.2"/><rect x="4.7" y="9.8" width="9.5" height="1.7"/><rect x="4.7" y="13.6" width="9.5" height="1.7"/></g></svg>
<div class="t" style="left:396.3px;top:1568.7px;font-size:21.30px;color:#c5cbcd;">DefaultPose.glb</div>
<svg class="abs" style="left:552.7px;top:1574.8px;" width="11" height="11" viewBox="0 0 11 11"><circle cx="5.5" cy="5.5" r="5" fill="#5b6e70"/></svg>
<div class="t" style="left:640.0px;top:1568.8px;font-size:21.20px;color:#c5cbcd;">Animation</div>
<div class="t" style="left:814.4px;top:1569.1px;font-size:20.80px;color:#c5cbcd;">4.53...</div>
<svg class="abs" style="left:362.7px;top:1610.0px;" width="19" height="18" viewBox="0 0 19 18"><g fill="#5b6e70"><polygon points="0,3.6 17.4,0 17.6,2.8 0,6.4"/><rect x="0" y="6.2" width="18.4" height="11.8"/></g><g fill="#2a3438"><polygon points="5,6.2 18.4,3.4 18.4,5.8 5,6.2"/><rect x="4.7" y="9.8" width="9.5" height="1.7"/><rect x="4.7" y="13.6" width="9.5" height="1.7"/></g></svg>
<div class="t" style="left:396.3px;top:1611.0px;font-size:21.30px;color:#c5cbcd;">GetHit.glb</div>
<svg class="abs" style="left:497.0px;top:1617.0px;" width="11" height="11" viewBox="0 0 11 11"><circle cx="5.5" cy="5.5" r="5" fill="#5b6e70"/></svg>
<div class="t" style="left:640.0px;top:1611.1px;font-size:21.20px;color:#c5cbcd;">Animation</div>
<div class="t" style="left:814.4px;top:1611.4px;font-size:20.80px;color:#c5cbcd;">6.45...</div>
<svg class="abs" style="left:362.7px;top:1652.2px;" width="19" height="18" viewBox="0 0 19 18"><g fill="#5b6e70"><polygon points="0,3.6 17.4,0 17.6,2.8 0,6.4"/><rect x="0" y="6.2" width="18.4" height="11.8"/></g><g fill="#2a3438"><polygon points="5,6.2 18.4,3.4 18.4,5.8 5,6.2"/><rect x="4.7" y="9.8" width="9.5" height="1.7"/><rect x="4.7" y="13.6" width="9.5" height="1.7"/></g></svg>
<div class="t" style="left:396.3px;top:1653.2px;font-size:21.30px;color:#c5cbcd;">Idle.glb</div>
<svg class="abs" style="left:471.0px;top:1659.2px;" width="11" height="11" viewBox="0 0 11 11"><circle cx="5.5" cy="5.5" r="5" fill="#5b6e70"/></svg>
<div class="t" style="left:640.0px;top:1653.3px;font-size:21.20px;color:#c5cbcd;">Animation</div>
<div class="t" style="left:814.4px;top:1653.6px;font-size:20.80px;color:#c5cbcd;">5.70...</div>
<svg class="abs" style="left:362.7px;top:1694.5px;" width="19" height="18" viewBox="0 0 19 18"><g fill="#5b6e70"><polygon points="0,3.6 17.4,0 17.6,2.8 0,6.4"/><rect x="0" y="6.2" width="18.4" height="11.8"/></g><g fill="#2a3438"><polygon points="5,6.2 18.4,3.4 18.4,5.8 5,6.2"/><rect x="4.7" y="9.8" width="9.5" height="1.7"/><rect x="4.7" y="13.6" width="9.5" height="1.7"/></g></svg>
<div class="t" style="left:396.3px;top:1695.5px;font-size:21.30px;color:#ffffff;">Run.glb</div>
<svg class="abs" style="left:475.7px;top:1701.5px;" width="11" height="11" viewBox="0 0 11 11"><circle cx="5.5" cy="5.5" r="5" fill="#5b6e70"/></svg>
<div class="t" style="left:640.0px;top:1695.6px;font-size:21.20px;color:#ffffff;">Animation</div>
<div class="t" style="left:814.4px;top:1695.9px;font-size:20.80px;color:#ffffff;">6.64...</div>
</body></html>
